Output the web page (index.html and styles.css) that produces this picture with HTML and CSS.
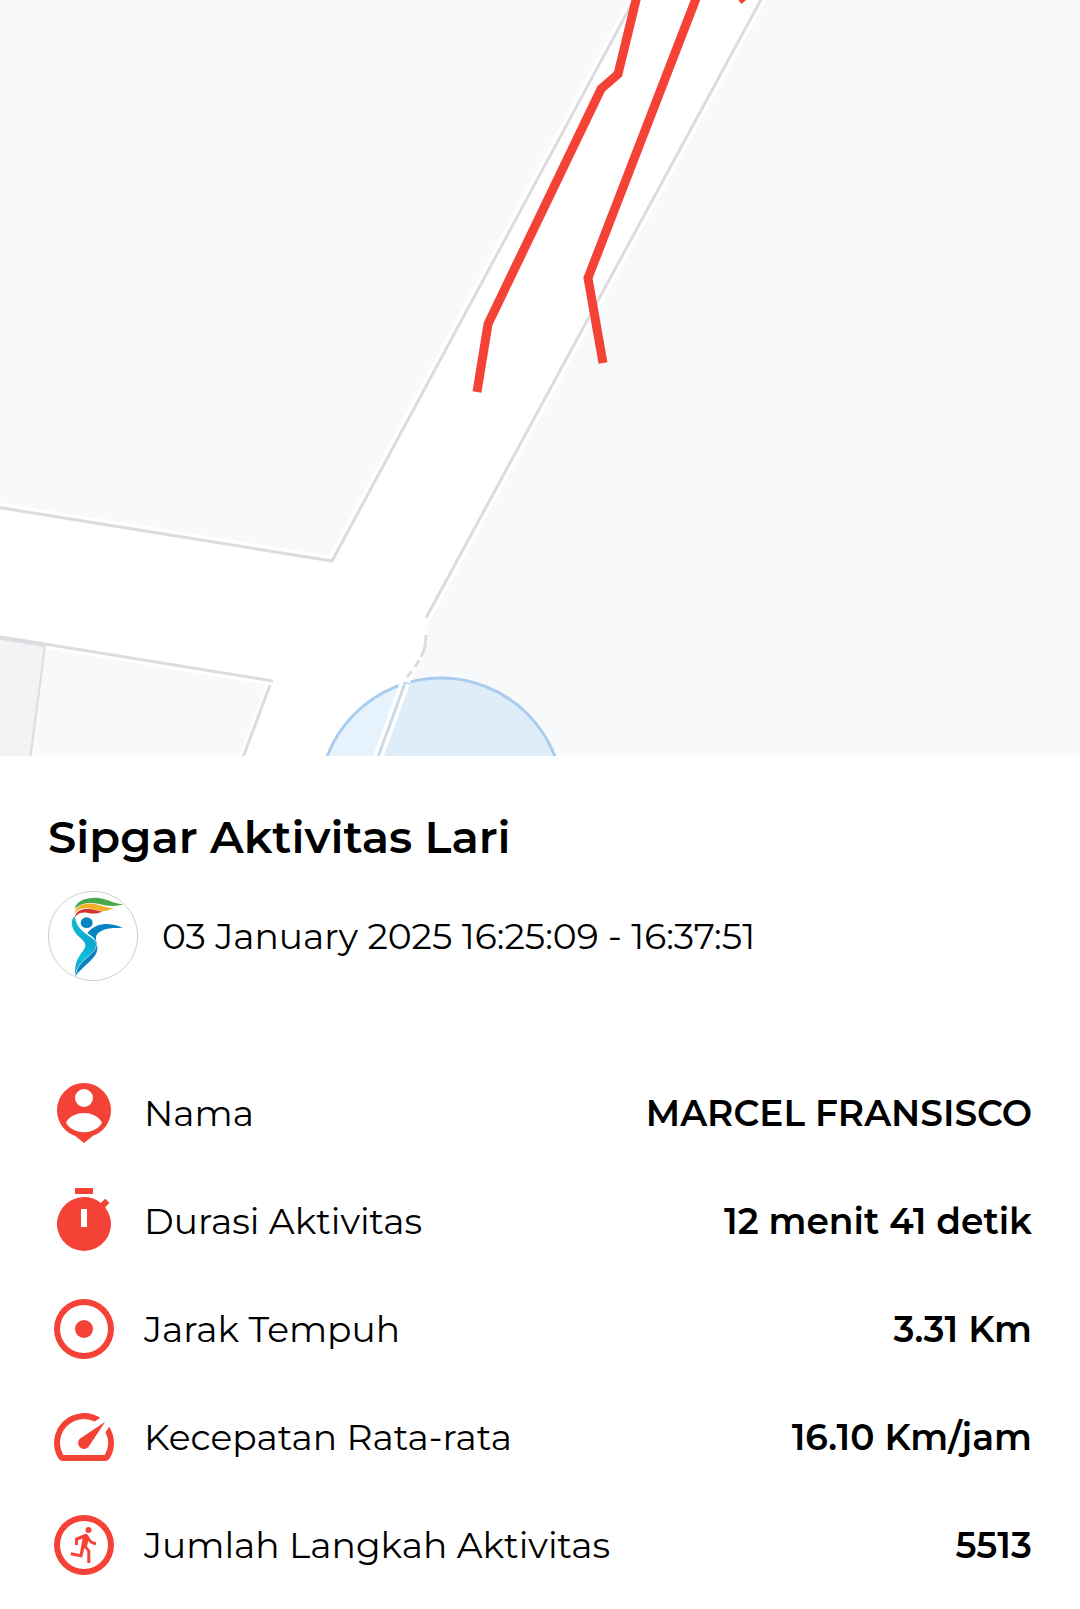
FILE: index.html
```html
<!DOCTYPE html>
<html lang="id">
<head>
  <meta charset="UTF-8">
  <meta name="viewport" content="width=device-width, initial-scale=1.0">
  <title>Sipgar Aktivitas Lari</title>
  <link rel="stylesheet" href="styles.css">
</head>
<body>

<div class="map">
  <svg viewBox="0 0 1080 756" preserveAspectRatio="xMidYMid slice" role="img" aria-label="Peta rute lari">
    <rect class="land" width="1080" height="756"/>
    <!-- Roads -->
    <path class="road" d="M634 0L332 561L0 508V636L273 681L244 756H378L405 683L422 657L427 640V618L761 0Z"/>
    <!-- Current location -->
    <circle class="location" cx="441" cy="800" r="122"/>
    <g class="casing">
      <path d="M636 -4L332 561L-4 507"/>
      <path d="M-4 635L273 681L243 760"/>
      <path d="M763 -4L426 618"/>
      <path d="M405 683L377 760"/>
    </g>
    <path class="kerb-gap" d="M424 615L423 635L420 655L412 668L406 682"/>
    <path class="building" d="M-4 638L45 646L30 760H-4Z"/>
    <g class="kerb">
      <path d="M636 -4L332 561L-4 507"/>
      <path d="M-4 636L273 681M270 685L242 760"/>
      <path d="M763 -4L426 618"/>
      <path d="M426 635L425 647L421 657M419 660L415 667M412 671L407 677"/>
    </g>
    <path class="kerb-blue" d="M405 683L377 760"/>
    <!-- Running route -->
    <g class="route">
      <path d="M637 -4L618 74L601 89L488 324L477 392"/>
      <path d="M697 -4L588 278L603 363"/>
      <path d="M739 -6L745 1"/>
    </g>
  </svg>
</div>

<div class="detail">
  <h1>Sipgar Aktivitas Lari</h1>

  <div class="meta">
    <svg class="avatar" viewBox="54 63 270 270" aria-hidden="true">
      <defs>
        <linearGradient id="body" x1="0" y1="0" x2="0" y2="1">
          <stop offset="0" stop-color="#12bcd4"/>
          <stop offset="0.45" stop-color="#0caad0"/>
          <stop offset="0.7" stop-color="#0bc0d6"/>
          <stop offset="1" stop-color="#0a8fc8"/>
        </linearGradient>
      </defs>
      <circle cx="189" cy="198" r="134" fill="#fff" stroke="#b5b5b5" stroke-width="2"/>
      <path fill="#48a84c" d="M134 118C138 92 168 82 200 83C232 85 243 99 280 103C254 111 231 108 208 102C176 95 150 99 134 118Z"/>
      <path fill="#f4b12d" d="M133 131C138 106 162 99 187 101C213 103 225 114 251 113C232 124 213 127 195 120C169 111 148 112 133 131Z"/>
      <path fill="#d9302f" d="M134 143C137 122 156 115 178 117C193 118 204 126 219 124C204 132 190 132 175 129C156 125 143 129 134 143Z"/>
      <ellipse cx="170" cy="158" rx="18" ry="16" fill="#0683c3"/>
      <path fill="url(#body)" d="M133 139C140 165 149 178 170 193C190 207 201 213 201 225C197 245 175 255 158 274C145 288 138 301 137 316L135 317C135 292 137 277 146 262C155 246 165 239 166 226C167 213 148 204 136 188C122 169 123 149 133 139Z"/>
      <path fill="#0683c3" d="M172 190C188 168 209 162 232 162C251 162 264 169 280 173C260 174 243 172 222 179C203 186 196 195 198 211C202 225 204 237 200 247C190 272 159 288 137 318C138 298 146 284 162 269C181 251 196 240 197 222C198 206 187 199 172 190Z"/>
      <path fill="none" stroke="#fff" stroke-width="2" d="M168 190C188 203 200 209 199 225C197 244 179 254 163 269C147 284 139 297 137 315"/>
    </svg>
    <time class="date">03 January 2025 16:25:09 - 16:37:51</time>
  </div>

  <dl class="stats">
    <div class="stat">
      <dt>
        <svg class="icon" viewBox="0 0 24 24" aria-hidden="true">
          <path fill-rule="evenodd" d="M12 2a9 9 0 0 0-9 9c0 4.100 2.500 7.400 6 8.600L12 22l3-2.400c3.500-1.200 6-4.500 6-8.600a9 9 0 0 0-9-9zM12 4a3 3 0 1 1 0 6 3 3 0 0 1 0-6zM6 15.200c1-2.100 3.600-3.200 6-3.200s5 1.100 6 3.200c-1 2-3.400 3.200-6 3.200s-5-1.200-6-3.200z"/>
        </svg>
        Nama
      </dt>
      <dd>MARCEL FRANSISCO</dd>
    </div>
    <div class="stat">
      <dt>
        <svg class="icon" viewBox="0 0 24 24" aria-hidden="true">
          <path fill-rule="evenodd" d="M9 1h6v2H9zM19.030 7.390l1.420-1.420c-.43-.51-.9-.99-1.410-1.410l-1.420 1.420A8.960 8.960 0 0 0 12 4a9 9 0 1 0 7.030 3.390zM13 14h-2V8h2z"/>
        </svg>
        Durasi Aktivitas
      </dt>
      <dd>12 menit 41 detik</dd>
    </div>
    <div class="stat">
      <dt>
        <svg class="icon" viewBox="0 0 24 24" aria-hidden="true">
          <path fill-rule="evenodd" d="M12 2a10 10 0 1 0 0 20 10 10 0 0 0 0-20zM12 20a8 8 0 1 1 0-16 8 8 0 0 1 0 16z"/>
          <circle cx="12" cy="12" r="3"/>
        </svg>
        Jarak Tempuh
      </dt>
      <dd>3.31 Km</dd>
    </div>
    <div class="stat">
      <dt>
        <svg class="icon" viewBox="0 0 24 24" aria-hidden="true">
          <path d="M20.380 8.570l-1.230 1.850a8 8 0 0 1-.22 7.580H5.070A8 8 0 0 1 15.580 6.850l1.850-1.230A10 10 0 0 0 3.350 19a2 2 0 0 0 1.720 1h13.850a2 2 0 0 0 1.740-1 10 10 0 0 0-.27-10.440zM10.590 15.410a2 2 0 0 0 2.830 0l5.660-8.490-8.490 5.660a2 2 0 0 0 0 2.830z"/>
        </svg>
        Kecepatan Rata-rata
      </dt>
      <dd>16.10 Km/jam</dd>
    </div>
    <div class="stat">
      <dt>
        <svg class="icon" viewBox="0 0 24 24" aria-hidden="true">
          <path fill-rule="evenodd" d="M12 2a10 10 0 1 0 0 20 10 10 0 0 0 0-20zM12 20a8 8 0 1 1 0-16 8 8 0 0 1 0 16z"/>
          <circle cx="13.500" cy="7" r="1"/>
          <path d="M11.900 8.500L9 9.700V12h1v-1.600l1.500-.5-.9 5.100-2.900-.6-.2 1 3.900.8.700-3.200 1 1V18h1v-4.200l-1.100-1.200.4-1.900c.7.900 1.600 1.300 2.600 1.300v-1c-1 0-1.600-.5-2-1.200l-.5-.8c-.3-.6-.8-.8-1.600-.5z"/>
        </svg>
        Jumlah Langkah Aktivitas
      </dt>
      <dd>5513</dd>
    </div>
  </dl>
</div>

</body>
</html>
```
FILE: styles.css
```css
* { margin: 0; padding: 0; box-sizing: border-box; }

body {
  font-family: 'Montserrat', 'Inter', sans-serif;
  font-size: 36px;
  line-height: 48px;
  background: #fff;
  color: #000;
}

/* Map */
.map svg {
  display: block;
  width: 100%;
}

.land { fill: #f8f9fb; }
.road { fill: #fff; }

.building {
  fill: #f1f3f5;
  stroke: #dcdde0;
  stroke-width: 2;
}

.location {
  fill: #1a92e0;
  fill-opacity: 0.11;
  stroke: #a9cdee;
  stroke-width: 3;
}

.casing, .kerb, .kerb-gap, .kerb-blue, .route { fill: none; }

.casing {
  stroke: #fff;
  stroke-width: 10;
}

.kerb-gap {
  stroke: #fff;
  stroke-width: 8;
}

.kerb {
  stroke: #dcdce0;
  stroke-width: 3;
}

.kerb-blue {
  stroke: #ccdae6;
  stroke-width: 3;
}

.route {
  stroke: #f44336;
  stroke-width: 9;
}

/* Activity detail */
.detail {
  padding: 54px 48px 28px;
}

h1 {
  font-size: 45px;
  font-weight: 600;
  line-height: 54px;
  margin-bottom: 27px;
}

.meta {
  display: flex;
  align-items: center;
  gap: 24px;
  margin-bottom: 96px;
}

.avatar {
  flex: none;
  width: 90px;
  height: 90px;
}

.stats {
  display: flex;
  flex-direction: column;
  gap: 36px;
}

.stat {
  display: flex;
  justify-content: space-between;
  align-items: center;
  gap: 24px;
}

.stat dt {
  display: flex;
  align-items: center;
  gap: 24px;
}

.stat dd {
  font-weight: 600;
  text-align: right;
}

.icon {
  flex: none;
  width: 72px;
  height: 72px;
  fill: #f44336;
}
```
